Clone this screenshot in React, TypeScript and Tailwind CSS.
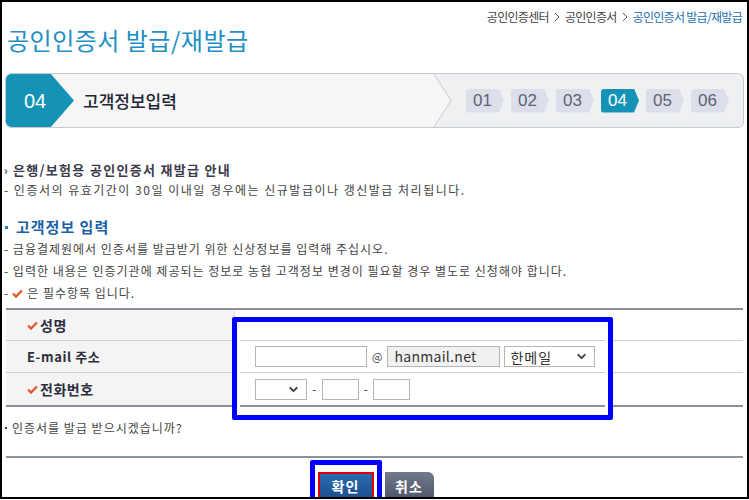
import { ChevronDown } from 'lucide-react'

const steps = ['01', '02', '03', '04', '05', '06']

function Crumb() {
  return (
    <svg width="6" height="10" viewBox="0 0 6 10" className="mx-[5px]">
      <path d="M1 1 L5 5 L1 9" fill="none" stroke="#555" strokeWidth="1" />
    </svg>
  )
}

function Check() {
  return (
    <svg width="11" height="9" viewBox="0 0 11 9" className="mr-[2px]">
      <path d="M1 4.5 L4 7.5 L10 1.5" fill="none" stroke="#e0592a" strokeWidth="2.4" />
    </svg>
  )
}

function Sel({ w, label }: { w: string; label?: string }) {
  return (
    <div className={`${w} h-[21px] border border-[#b5b5b5] bg-white flex items-center justify-between pl-[5px] pr-[6px]`}>
      <span className="text-[14px] text-[#333] leading-none tracking-[1px]">{label}</span>
      <ChevronDown size={13} strokeWidth={3.5} className="text-[#3c3f48]" />
    </div>
  )
}

export default function App() {
  return (
    <div className="w-[749px] h-[499px] border-2 border-black bg-white relative overflow-hidden font-['Noto_Sans_CJK_KR',sans-serif] text-[#333]">
      {/* breadcrumb */}
      <div className="flex justify-end items-center pr-[5px] pt-[7px] h-[22px] text-[12px] leading-[14px] text-[#444] tracking-[-0.7px]">
        <span>공인인증센터</span>
        <Crumb />
        <span>공인인증서</span>
        <Crumb />
        <span className="text-[#1f6fae]">공인인증서 발급/재발급</span>
      </div>

      <h1 className="pl-[5px] h-[32px] text-[24px] leading-[32px] text-[#1d8fc4] font-normal tracking-[0.5px]">공인인증서 발급/재발급</h1>

      {/* step bar */}
      <div className="mt-[17px] mx-[3px] h-[55px] border border-[#c7cbd1] rounded-[6px] bg-[#eff0f2] flex overflow-hidden">
        <div className="flex-1 flex items-stretch bg-[#f6f6f6]">
          <div className="w-[68px] bg-[#1593b7] [clip-path:polygon(0_0,66%_0,100%_50%,66%_100%,0_100%)] rounded-l-[5px] flex items-center pl-[18px]">
            <span className="text-white text-[20px] font-['Liberation_Sans',sans-serif]">04</span>
          </div>
          <div className="pl-[9px] flex items-center text-[17px] font-medium text-[#222433]">고객정보입력</div>
        </div>
        <svg width="19" height="53" viewBox="0 0 19 53" className="block">
          <polygon points="0,0 1,0 18,26.5 1,53 0,53" fill="#f6f6f6" />
          <polyline points="1,0 18,26.5 1,53" fill="none" stroke="#c7cbd1" strokeWidth="1" />
        </svg>
        <div className="flex items-center gap-[7px] pl-[14px] pr-[14px]">
          {steps.map((s) => (
            <div
              key={s}
              className={`w-[38px] h-[24px] rounded-l-[3px] [clip-path:polygon(0_0,33px_0,38px_50%,33px_100%,0_100%)] ${
                s === '04' ? 'bg-[#1593b7] text-white' : 'bg-[#dcdfe9] text-[#5d6373]'
              }`}
            >
              <div className="w-[33px] h-full flex items-center justify-center text-[17px] font-['Liberation_Sans',sans-serif]">{s}</div>
            </div>
          ))}
        </div>
      </div>

      {/* notice */}
      <div className="mt-[32px] pl-[2px]">
        <div className="flex items-center h-[20px] text-[13px] font-bold text-[#3a3a4a]">
          <span className="w-[9px] text-[11px]">›</span>
          <span className="tracking-[1.3px]">은행/보험용 공인인증서 재발급 안내</span>
        </div>
        <div className="h-[20px] leading-[20px] text-[12px] text-[#444] tracking-[1.5px]">- 인증서의 유효기간이 30일 이내일 경우에는 신규발급이나 갱신발급 처리됩니다.</div>
      </div>

      <div className="mt-[16px] pl-[3px]">
        <div className="flex items-center h-[22px] text-[15px] font-bold text-[#1c5fa9]">
          <span className="w-[3px] h-[3px] bg-[#2a7fc0] mr-[8px]" />
          <span className="tracking-[1px]">고객정보 입력</span>
        </div>
        <div className="text-[12px] leading-[22px] text-[#444] tracking-[1px] -ml-[1px]">
          <div>- 금융결제원에서 인증서를 발급받기 위한 신상정보를 입력해 주십시오.</div>
          <div>- 입력한 내용은 인증기관에 제공되는 정보로 농협 고객정보 변경이 필요할 경우 별도로 신청해야 합니다.</div>
          <div className="flex items-center">
            <span className="mr-[3px]">-</span>
            <Check />
            <span className="ml-[2px]">은 필수항목 입니다.</span>
          </div>
        </div>
      </div>

      {/* form table */}
      <div className="mt-[4px] mx-[4px] border-t-2 border-b-2 border-[#8a9099] text-[13px]">
        <div className="flex h-[31px] border-b border-[#c8ced5]">
          <div className="w-[228px] bg-[#f4f4f4] flex items-center pl-[21px] font-bold text-[#2d2d3d]">
            <Check />
            <span className="text-[14px] tracking-[0.5px]">성명</span>
          </div>
          <div className="flex-1 border-l border-[#dde1e6]" />
        </div>
        <div className="flex h-[32px] border-b border-[#c8ced5]">
          <div className="w-[228px] bg-[#f4f4f4] flex items-center pl-[21px] font-bold text-[#2d2d3d] text-[13px] tracking-[0.6px]">E-mail 주소</div>
          <div className="flex-1 flex items-center pl-[21px]">
            <div className="w-[112px] h-[21px] border border-[#b5b5b5]" />
            <span className="mx-[5px] text-[11px] text-[#444]">@</span>
            <div className="w-[113px] h-[21px] border border-[#b5b5b5] bg-[#f1f1f1] flex items-center pl-[6px] text-[14px] text-[#333] tracking-[0.3px]">hanmail.net</div>
            <div className="ml-[4px]">
              <Sel w="w-[91px]" label="한메일" />
            </div>
          </div>
        </div>
        <div className="flex h-[32px]">
          <div className="w-[228px] bg-[#f4f4f4] flex items-center pl-[21px] font-bold text-[#2d2d3d]">
            <Check />
            <span className="text-[14px] tracking-[0.5px]">전화번호</span>
          </div>
          <div className="flex-1 flex items-center pl-[21px]">
            <Sel w="w-[52px]" />
            <span className="mx-[5px] text-[#555]">-</span>
            <div className="w-[37px] h-[21px] border border-[#b5b5b5]" />
            <span className="mx-[5px] text-[#555]">-</span>
            <div className="w-[37px] h-[21px] border border-[#b5b5b5]" />
          </div>
        </div>
      </div>

      <div className="mt-[11px] pl-[3px] flex items-center h-[20px] text-[12px] text-[#444] tracking-[1px]">
        <span className="w-[2px] h-[2px] bg-[#333] mr-[5px]" />
        <span>인증서를 발급 받으시겠습니까?</span>
      </div>

      <div className="mt-[18px] mx-[4px] h-[2px] bg-[#8d939c]" />

      <div className="mt-[14px] flex justify-center gap-[11px] pl-[2px]">
        <button className="w-[56px] h-[29px] border-2 border-[#e00000] bg-gradient-to-b from-[#2c6bb0] to-[#1a4f8e] text-white font-bold text-[14px] tracking-[1px]">확인</button>
        <button className="w-[49px] h-[28px] rounded-tr-[6px] rounded-br-[2px] bg-gradient-to-b from-[#717a8d] to-[#4f5669] text-white font-bold text-[14px] tracking-[1px]">취소</button>
      </div>

      {/* annotation boxes */}
      <div className="absolute left-[230px] top-[315px] w-[381px] h-[103px] border-[5px] border-[#0000ff] rounded-[2px] shadow-[inset_0_0_0_3px_white]" />
      <div className="absolute left-[308px] top-[458px] w-[72px] h-[44px] border-[5px] border-[#0000ff] rounded-[2px]" />
    </div>
  )
}
